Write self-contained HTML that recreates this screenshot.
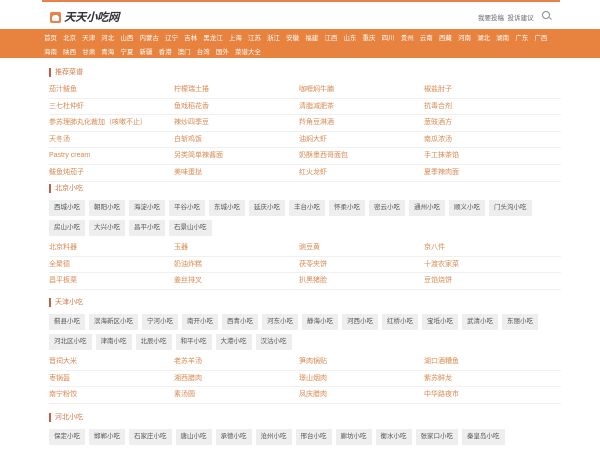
<!DOCTYPE html><html><head><meta charset="utf-8"><style>
*{margin:0;padding:0;box-sizing:border-box}
body{width:600px;height:450px;overflow:hidden;background:#fff;font-family:"Liberation Sans","Noto Sans CJK SC",sans-serif;font-size:7px;color:#666;position:relative}
.topline{position:absolute;left:42px;top:0;width:518px;height:2px;background:#e8824a}
.logo{position:absolute;left:50px;top:9px;display:flex;align-items:center}
.ic{width:11px;height:11px;background:#e8824a;border-radius:2px;position:relative}
.ic:after{content:"";position:absolute;left:2px;top:3px;width:7px;height:6px;background:#fff;border-radius:3px 3px 1px 1px}
.lt{font-size:11.5px;font-weight:bold;font-style:italic;color:#333;margin-left:3px;letter-spacing:-0.5px}
.hr{position:absolute;left:478px;top:12px;color:#666;font-size:6.5px}
.srch{position:absolute;left:542px;top:11px;width:8px;height:8px;border:1px solid #888;border-radius:50%}
.srch:after{content:"";position:absolute;left:6px;top:6px;width:3px;height:1px;background:#888;transform:rotate(45deg)}
.nav{position:absolute;left:0;top:29px;width:600px;height:29px;background:#e8823f;padding:3px 0 0 44px}
.nav div{color:#fff;font-size:6.5px;line-height:14px;white-space:nowrap}
.nav span{margin-right:6.1px}
.sec{position:absolute;left:49px;width:512px}
.t{border-left:2px solid #c0604a;padding-left:4px;color:#d07a4a;font-size:7px;height:9px;line-height:9px}
.rows{margin-top:5px}
.r{display:flex;height:16.6px;line-height:16px;border-bottom:1px solid #f0f0f0}
.r span{width:125px;color:#d9884f}
.tags{display:flex;flex-wrap:wrap;margin-top:7px;width:510px}
.tags span{background:#eee;color:#555;height:16px;line-height:16px;padding:0 5px;margin:0 4px 4px 0;font-size:6.5px}
</style></head><body>
<div class="topline"></div>
<div class="logo"><div class="ic"></div><div class="lt">天天小吃网</div></div>
<div class="hr">我要投稿&nbsp; 投诉建议</div>
<div class="srch"></div>
<div class="nav"><div><span>首页</span><span>北京</span><span>天津</span><span>河北</span><span>山西</span><span>内蒙古</span><span>辽宁</span><span>吉林</span><span>黑龙江</span><span>上海</span><span>江苏</span><span>浙江</span><span>安徽</span><span>福建</span><span>江西</span><span>山东</span><span>重庆</span><span>四川</span><span>贵州</span><span>云南</span><span>西藏</span><span>河南</span><span>湖北</span><span>湖南</span><span>广东</span><span>广西</span></div><div><span>海南</span><span>陕西</span><span>甘肃</span><span>青海</span><span>宁夏</span><span>新疆</span><span>香港</span><span>澳门</span><span>台湾</span><span>国外</span><span>菜谱大全</span></div></div>

<div class="sec" style="top:68px"><div class="t">推荐菜谱</div><div class="rows">
<div class="r"><span>茄汁鲅鱼</span><span>柠檬瑞士捲</span><span>咖喱焖牛腩</span><span>椒盐肘子</span></div>
<div class="r"><span>三七杜仲虾</span><span>鱼戏稻花香</span><span>清脂减肥茶</span><span>抗毒合剂</span></div>
<div class="r"><span>参苏理肺丸化裁加（咳嗽不止）</span><span>辣炒四季豆</span><span>羚角豆淋酒</span><span>葱豉酒方</span></div>
<div class="r"><span>天冬汤</span><span>白斩鸡饭</span><span>油焖大虾</span><span>南瓜浓汤</span></div>
<div class="r"><span>Pastry cream</span><span>另类简单辣酱面</span><span>奶酥墨西哥面包</span><span>手工抹茶馅</span></div>
<div class="r"><span>鲅鱼炖茄子</span><span>美味蛋挞</span><span>红火龙虾</span><span>夏季辣肉面</span></div></div></div>

<div class="sec" style="top:184px"><div class="t">北京小吃</div><div class="tags">
<span>西城小吃</span><span>朝阳小吃</span><span>海淀小吃</span><span>平谷小吃</span><span>东城小吃</span><span>延庆小吃</span><span>丰台小吃</span><span>怀柔小吃</span><span>密云小吃</span><span>通州小吃</span><span>顺义小吃</span><span>门头沟小吃</span><span>房山小吃</span><span>大兴小吃</span><span>昌平小吃</span><span>石景山小吃</span></div>
<div class="rows" style="margin-top:0">
<div class="r"><span>北京料器</span><span>玉器</span><span>豌豆黄</span><span>京八件</span></div>
<div class="r"><span>全聚德</span><span>奶油炸糕</span><span>茯苓夹饼</span><span>十渡农家菜</span></div>
<div class="r"><span>昌平板栗</span><span>姜丝排叉</span><span>扒黑猪脸</span><span>豆馅烧饼</span></div></div></div>

<div class="sec" style="top:298px"><div class="t">天津小吃</div><div class="tags">
<span>蓟县小吃</span><span>滨海新区小吃</span><span>宁河小吃</span><span>南开小吃</span><span>西青小吃</span><span>河东小吃</span><span>静海小吃</span><span>河西小吃</span><span>红桥小吃</span><span>宝坻小吃</span><span>武清小吃</span><span>东丽小吃</span><span>河北区小吃</span><span>津南小吃</span><span>北辰小吃</span><span>和平小吃</span><span>大港小吃</span><span>汉沽小吃</span></div>
<div class="rows" style="margin-top:0">
<div class="r"><span>晋祠大米</span><span>老苏羊汤</span><span>笋肉锅贴</span><span>湖口酒糟鱼</span></div>
<div class="r"><span>枣锅盔</span><span>湘西腊肉</span><span>璟山烟肉</span><span>紫苏鲜龙</span></div>
<div class="r"><span>南宁粉饺</span><span>素汤圆</span><span>凤庆腊肉</span><span>中华路夜市</span></div></div></div>

<div class="sec" style="top:413px"><div class="t">河北小吃</div><div class="tags">
<span>保定小吃</span><span>邯郸小吃</span><span>石家庄小吃</span><span>唐山小吃</span><span>承德小吃</span><span>沧州小吃</span><span>邢台小吃</span><span>廊坊小吃</span><span>衡水小吃</span><span>张家口小吃</span><span>秦皇岛小吃</span></div></div>
</body></html>
